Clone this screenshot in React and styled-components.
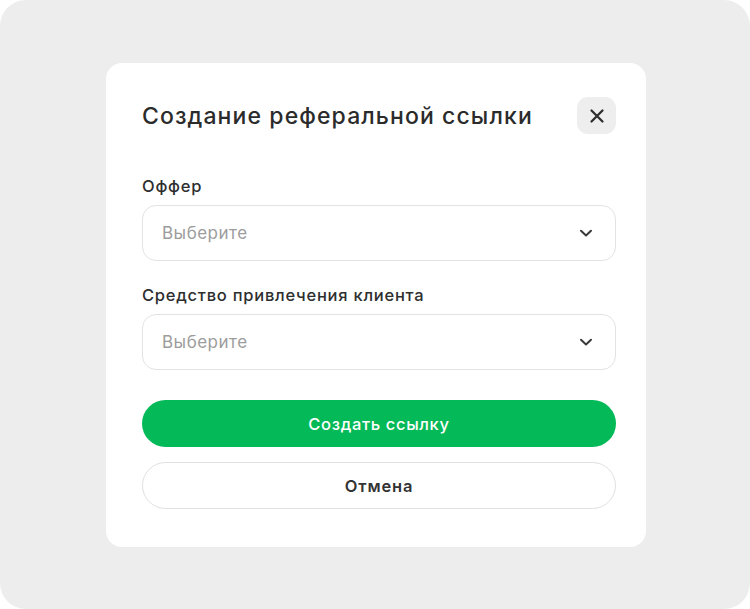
import React from "react";
import styled, { createGlobalStyle } from "styled-components";

const GlobalStyle = createGlobalStyle`
  html, body {
    margin: 0;
    padding: 0;
    background: #ffffff;
  }
  body {
    font-family: Inter, "Noto Sans", sans-serif;
    -webkit-font-smoothing: antialiased;
  }
`;

function Chevron() {
  return (
    <svg width="14" height="14" viewBox="0 0 14 14" fill="none">
      <path
        d="M2 4.8L7 9.5L12 4.8"
        stroke="#3a3a3a"
        strokeWidth="2"
        strokeLinecap="round"
        strokeLinejoin="round"
      />
    </svg>
  );
}

function CloseIcon() {
  return (
    <svg width="16" height="16" viewBox="0 0 16 16" fill="none">
      <path
        d="M2.5 2.5L13.5 13.5M13.5 2.5L2.5 13.5"
        stroke="#2f2f2f"
        strokeWidth="2.3"
        strokeLinecap="round"
      />
    </svg>
  );
}

function SelectField({ label }) {
  return (
    <Field>
      <Label>{label}</Label>
      <Select type="button">
        <Placeholder>Выберите</Placeholder>
        <Chevron />
      </Select>
    </Field>
  );
}

function App() {
  return (
    <>
      <GlobalStyle />
      <Backdrop>
        <Modal>
          <Header>
            <Title>Создание реферальной ссылки</Title>
            <CloseButton type="button" aria-label="Закрыть">
              <CloseIcon />
            </CloseButton>
          </Header>
          <Fields>
            <SelectField label="Оффер" />
            <SelectField label="Средство привлечения клиента" />
          </Fields>
          <Actions>
            <Button primary>Создать ссылку</Button>
            <Button>Отмена</Button>
          </Actions>
        </Modal>
      </Backdrop>
    </>
  );
}

const Backdrop = styled.div`
  width: 750px;
  height: 609px;
  box-sizing: border-box;
  background: #ededed;
  border-radius: 26px;
  display: flex;
  justify-content: center;
  align-items: flex-start;
  padding: 63px 0 0 2px;
`;

const Modal = styled.div`
  width: 540px;
  box-sizing: border-box;
  background: #ffffff;
  border-radius: 16px;
  padding: 34px 30px 38px 36px;
  display: flex;
  flex-direction: column;
`;

const Header = styled.div`
  display: flex;
  align-items: center;
  justify-content: space-between;
  height: 37px;
`;

const Title = styled.h2`
  margin: 0;
  font-size: 23px;
  font-weight: 550;
  color: #2b2b2b;
  letter-spacing: 1.1px;
`;

const CloseButton = styled.button`
  width: 39px;
  height: 37px;
  border: none;
  border-radius: 11px;
  background: #eeeeee;
  display: flex;
  align-items: center;
  justify-content: center;
  padding: 0;
  cursor: pointer;
`;

const Fields = styled.div`
  display: flex;
  flex-direction: column;
  gap: 24px;
  margin-top: 42px;
`;

const Field = styled.div`
  display: flex;
  flex-direction: column;
  gap: 9px;
`;

const Label = styled.div`
  font-size: 16.5px;
  font-weight: 500;
  color: #2e2e2e;
  line-height: 20px;
  letter-spacing: 0.75px;
`;

const Select = styled.button`
  height: 56px;
  box-sizing: border-box;
  border: 1px solid #e3e3e3;
  border-radius: 14px;
  background: #ffffff;
  display: flex;
  align-items: center;
  justify-content: space-between;
  padding: 0 22px 0 19px;
  font-family: inherit;
  cursor: pointer;
`;

const Placeholder = styled.span`
  font-size: 17px;
  color: #9c9c9c;
  letter-spacing: 0.5px;
`;

const Actions = styled.div`
  display: flex;
  flex-direction: column;
  gap: 15px;
  margin-top: 30px;
`;

const Button = styled.button`
  height: 47px;
  box-sizing: border-box;
  border-radius: 24px;
  font-family: inherit;
  font-size: 16.5px;
  letter-spacing: ${({ primary }) => (primary ? "0.65px" : "0.8px")};
  font-weight: ${({ primary }) => (primary ? 500 : 600)};
  color: ${({ primary }) => (primary ? "#ffffff" : "#333333")};
  background: ${({ primary }) => (primary ? "#04b957" : "#ffffff")};
  border: ${({ primary }) => (primary ? "none" : "1px solid #e0e0e0")};
  cursor: pointer;
`;

export default App;
